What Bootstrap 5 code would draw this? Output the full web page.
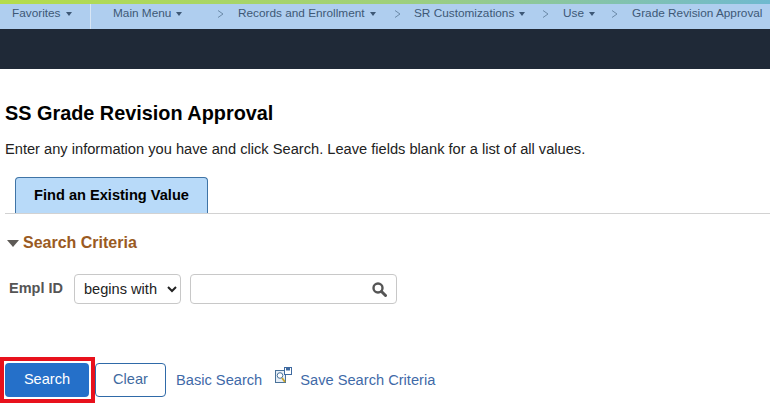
<!DOCTYPE html>
<html lang="en"><head><meta charset="utf-8"><title>SS Grade Revision Approval</title>
<link href="https://cdn.jsdelivr.net/npm/bootstrap@5.3.0/dist/css/bootstrap.min.css" rel="stylesheet">
<style>
html,body{height:410px;overflow:hidden;background:#fff}
body{font-family:"Liberation Sans",Arial,sans-serif;color:#000}
.topline{height:4px;background:linear-gradient(90deg,#b5dc4b 0%,#9fd07a 50%,#6fb9cf 100%)}
.crumbs{height:25px;background:#afceef;font-size:11.8px;color:#3d5876;white-space:nowrap;overflow:hidden;padding-bottom:5px}
.crumb{flex:none}
.fav{width:91px;height:25px;margin-bottom:-5px;padding:0 0 5px 12px;border-right:1px solid #d8e6f5}
.mm{width:126px;padding-left:22px}
.rec{width:156px}
.sr{width:128px}
.use{width:48px}
.car{display:inline-block;width:0;height:0;border:3.5px solid transparent;border-top:4px solid #3d5876;border-bottom-width:0;margin-left:5px;vertical-align:1px}
.sep{flex:none;width:21px;height:8px;display:block}
.sepn{width:20px}
.darkbar{height:40px;background:#1f2937}
.ttl{font-size:19.85px;font-weight:700;line-height:24px;margin:32px 0 0 5px}
.hint{font-size:14.65px;line-height:18px;margin:15px 0 0 5px;color:#222}
.tabrow{margin:19px 0 0 5px;height:37px;border-bottom:1px solid #d2d2d2;padding-left:10px}
.tabx{display:flex;align-items:center;justify-content:center;width:193px;height:36px;background:#b8daf9;border:1px solid #3f74a6;border-bottom:0;border-radius:4px 4px 0 0;font-size:14.6px;font-weight:700}
.crit{margin:19px 0 0 7px;height:20px;color:#9a5a22;font-size:16px;font-weight:700;line-height:18px}
.tri{width:0;height:0;border:6px solid transparent;border-top:7px solid #5e5a56;border-bottom:0;margin-right:4px}
.frow{margin:21px 0 0 9px;height:30px}
.lbl{font-size:14.5px;font-weight:700;color:#555;width:65px;margin-top:-1px}
.opsel{width:107px;height:30px;padding:0 0 0 5px;font-size:14.6px;font-family:inherit;color:#222;border:1px solid #c8c8c8;border-radius:4px;background:#fff}
.srch{width:207px;height:30px;margin-left:9px;border:1px solid #c8c8c8;border-radius:4px;padding-right:9px}
.btnrow{margin:53px 0 0 0;height:46px}
.hl{border:4px solid #e8111c;width:95px;height:46px;padding:2px 2px 2px 1px;background:#fff}
.sbtn{display:block;width:100%;height:100%;background:#2570c9;color:#fff;border:0;border-radius:4px;font-size:14.6px;font-family:inherit;padding:0}
.cbtn{width:71px;height:34px;background:#fff;color:#3f6aa0;border:1px solid #2f6aa8;border-radius:4px;font-size:14.6px;font-family:inherit;padding:0}
.lnk{font-size:14.65px;color:#3f6aa8;text-decoration:none;padding-top:2px}
.blnk{margin-left:10px}
.ico{margin:0 8px 0 12px}
</style></head><body>
<div class="topline"></div>
<div class="crumbs d-flex align-items-center">
<div class="crumb fav d-flex align-items-center">Favorites<i class="car"></i></div>
<div class="crumb mm">Main Menu<i class="car"></i></div>
<svg class="sep" viewBox="0 0 21 8"><path d="M1 0.5L6 4L1 7.5" fill="none" stroke="#6c8aa8"/></svg>
<div class="crumb rec">Records and Enrollment<i class="car"></i></div>
<svg class="sep sepn" viewBox="0 0 20 8"><path d="M1 0.5L6 4L1 7.5" fill="none" stroke="#6c8aa8"/></svg>
<div class="crumb sr">SR Customizations<i class="car"></i></div>
<svg class="sep" viewBox="0 0 21 8"><path d="M1 0.5L6 4L1 7.5" fill="none" stroke="#6c8aa8"/></svg>
<div class="crumb use">Use<i class="car"></i></div>
<svg class="sep" viewBox="0 0 21 8"><path d="M1 0.5L6 4L1 7.5" fill="none" stroke="#6c8aa8"/></svg>
<div class="crumb">Grade Revision Approval</div>
</div>
<div class="darkbar"></div>
<h1 class="ttl">SS Grade Revision Approval</h1>
<p class="hint">Enter any information you have and click Search. Leave fields blank for a list of all values.</p>
<div class="tabrow"><div class="tabx">Find an Existing Value</div></div>
<div class="crit d-flex align-items-center"><i class="tri"></i>Search Criteria</div>
<div class="frow d-flex align-items-center">
<label class="lbl">Empl ID</label>
<select class="opsel"><option>begins with</option></select>
<div class="srch d-flex align-items-center justify-content-end">
<svg width="15" height="15" viewBox="0 0 15 15"><circle cx="6" cy="6" r="4.5" fill="none" stroke="#555" stroke-width="2.4"/><path d="M9.5 9.5L13.5 13.5" stroke="#555" stroke-width="3" stroke-linecap="round"/></svg>
</div></div>
<div class="btnrow d-flex align-items-center">
<div class="hl"><button class="sbtn">Search</button></div>
<button class="cbtn">Clear</button>
<a class="lnk blnk" href="#">Basic Search</a>
<svg class="ico mb-2" width="18" height="18" viewBox="0 0 18 18"><rect x="1.5" y="3.5" width="10" height="12" fill="#e6eef7" stroke="#4a7299"/><circle cx="6" cy="8.5" r="2.8" fill="#fff" stroke="#4a7299"/><path d="M8 11l3 4" stroke="#c9a227" stroke-width="1.8"/><rect x="10.5" y="0.5" width="7" height="7" fill="#fff" stroke="#3f6aa0"/><rect x="12" y="1" width="4" height="2.5" fill="#3f6aa0"/></svg>
<a class="lnk" href="#">Save Search Criteria</a>
</div>
<script src="https://cdn.jsdelivr.net/npm/bootstrap@5.3.0/dist/js/bootstrap.bundle.min.js"></script>
</body></html>
